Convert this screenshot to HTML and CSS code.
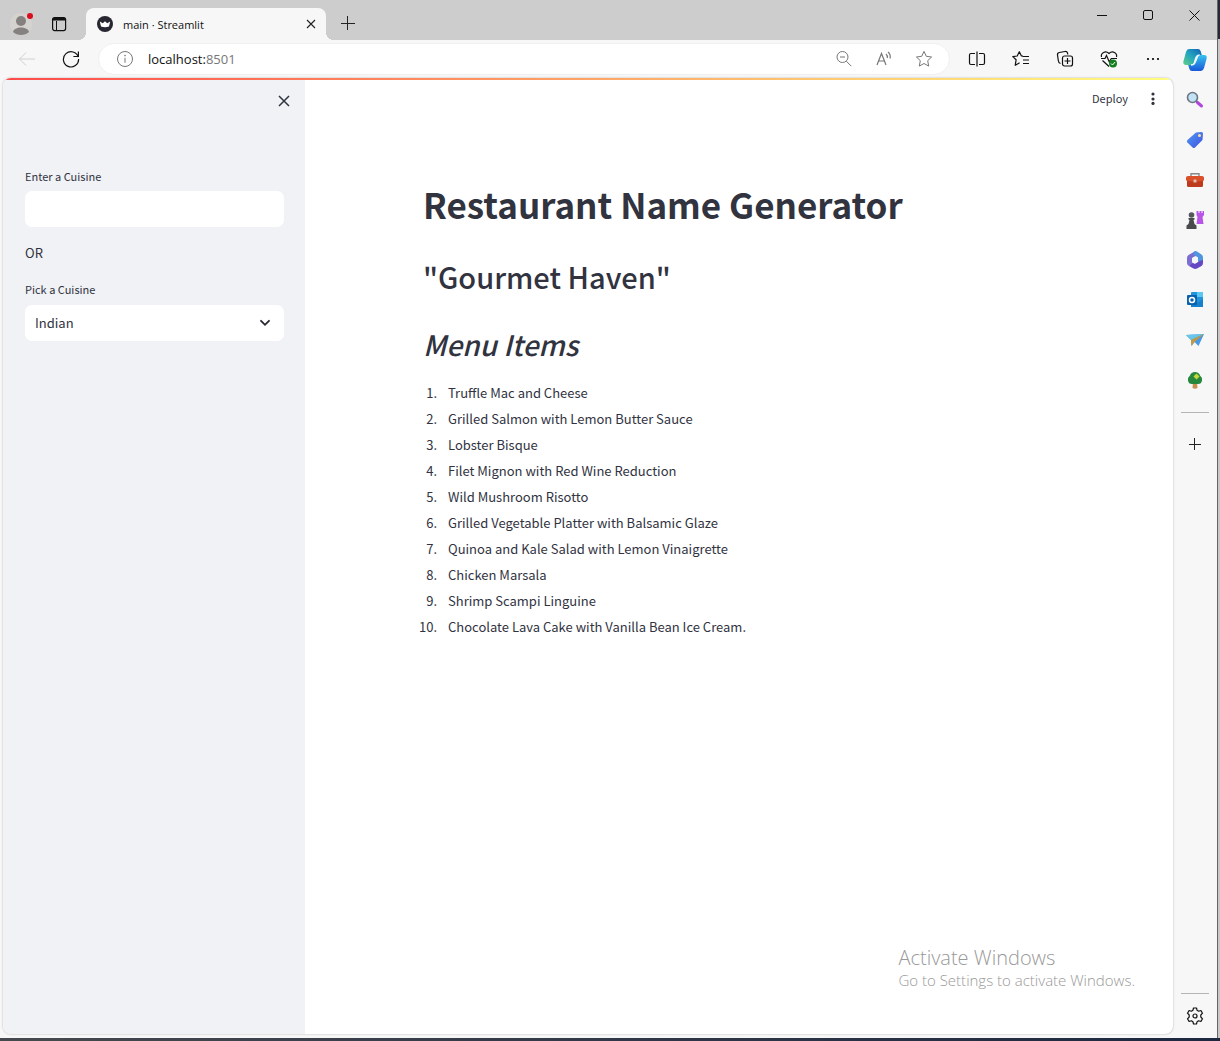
FILE: index.html
```html
<!DOCTYPE html>
<html lang="en">
<head>
<meta charset="utf-8">
<title>main · Streamlit</title>
<link rel="stylesheet" href="styles.css">
</head>
<body>
<div class="window">
  <header class="titlebar">
    <button class="profile" aria-label="Profile">
      <svg width="24" height="26" viewBox="0 0 24 26"><circle cx="12" cy="14" r="11" fill="#d5d3cf"/><circle cx="12" cy="11" r="5" fill="#858181"/><path d="M4 22c1-6 15-6 16 0-4 4-12 4-16 0z" fill="#858181"/><circle cx="21" cy="6" r="3" fill="#d90d1e"/></svg>
    </button>
    <button class="workspaces" aria-label="Tab actions">
      <svg width="16" height="16" viewBox="0 0 16 16"><rect x="1.6" y="1.6" width="13" height="13" rx="2" fill="none" stroke="#111" stroke-width="1.2"/><path d="M1.500 4.600V3.500a2 2 0 0 1 2-2h9a2 2 0 0 1 2 2v1.100z" fill="#111"/><path d="M5.500 5v9" stroke="#111"/></svg>
    </button>
    <div class="tab">
      <svg width="16" height="16" viewBox="0 0 16 16"><circle cx="8" cy="8" r="8" fill="#262730"/><path d="M2.800 5.400l3 1.800L8 5.200l2.200 2 3-1.800-1.200 5q-4 1.600-8 0z" fill="#fff"/></svg>
      <span class="tab-title">main · Streamlit</span>
      <button aria-label="Close tab"><svg width="10" height="10" viewBox="0 0 10 10"><path d="M1 1l8 8M9 1L1 9" stroke="#222" stroke-width="1.1"/></svg></button>
    </div>
    <button class="new-tab" aria-label="New tab"><svg width="14" height="14" viewBox="0 0 14 14"><path d="M6.500 0v14M0 7.500h14" stroke="#222"/></svg></button>
    <div class="controls">
      <button aria-label="Minimize"><svg width="11" height="11" viewBox="0 0 11 11"><path d="M0 5.500h10" stroke="#111"/></svg></button>
      <button aria-label="Maximize"><svg width="11" height="11" viewBox="0 0 11 11"><rect x=".5" y=".5" width="9" height="9" rx="1.500" fill="none" stroke="#111"/></svg></button>
      <button aria-label="Close"><svg width="11" height="11" viewBox="0 0 11 11"><path d="M.5.5l10 10M10.500.5l-10 10" stroke="#111"/></svg></button>
    </div>
  </header>

  <div class="browser">
    <div class="browser-main">
      <nav class="toolbar">
        <button class="tool" aria-label="Back"><svg width="18" height="18" viewBox="0 0 18 18"><path d="M17 9H1.500M8 2.500L1.500 9 8 15.500" fill="none" stroke="#d0d0d0"/></svg></button>
        <button class="tool" aria-label="Refresh"><svg width="18" height="18" viewBox="0 0 18 18"><path d="M16.300 7.200A7.600 7.600 0 1 0 16.600 9M16.400 1.500v5h-5" fill="none" stroke="#111" stroke-width="1.200"/></svg></button>
        <div class="address">
          <svg width="18" height="18" viewBox="0 0 18 18"><circle cx="9" cy="9" r="7.500" fill="none" stroke="#777"/><path d="M9 7.800v5" stroke="#777"/><circle cx="9" cy="5.600" r=".8" fill="#777"/></svg>
          <span class="url">localhost:<span>8501</span></span>
          <button aria-label="Zoom"><svg width="18" height="18" viewBox="0 0 18 18"><path d="M11.300 11.200l5 5M5 7h5" stroke="#777"/><circle cx="7.500" cy="7" r="5.500" fill="none" stroke="#777"/></svg></button>
          <button aria-label="Read aloud"><svg width="18" height="18" viewBox="0 0 18 18"><path d="M2 15L6.500 3.500 11 15M3.500 11h6M11 4q1.800 1.500 1.200 4M13 2q3 2.500 2 6.500" fill="none" stroke="#777" stroke-width="1.200"/></svg></button>
          <button aria-label="Favorite"><svg width="18" height="18" viewBox="0 0 18 18"><path d="M9 1.400l2.300 4.900 5.300.7-3.900 3.700 1 5.400L9 13.500l-4.700 2.600 1-5.400L1.400 7l5.300-.7z" fill="none" stroke="#777" stroke-linejoin="round"/></svg></button>
        </div>
        <button class="tool" aria-label="Split screen"><svg width="18" height="18" viewBox="0 0 18 18"><path d="M7 3.500H3A1.500 1.500 0 0 0 1.500 5v8A1.500 1.500 0 0 0 3 14.500h4M11 3.500h4A1.500 1.500 0 0 1 16.500 5v8a1.500 1.500 0 0 1-1.500 1.500h-4M9 1.500v15" fill="none" stroke="#111" stroke-width="1.200"/></svg></button>
        <button class="tool" aria-label="Favorites"><svg width="18" height="18" viewBox="0 0 18 18"><path d="M11 6L9.300 5.800 7.300 1.700 5.200 6 .8 6.600l3.300 3.200-.9 5.500 4.400-2.500M10.500 6.500H17M11 10h6M11 13.500h6" fill="none" stroke="#111" stroke-width="1.200" stroke-linejoin="round"/></svg></button>
        <button class="tool" aria-label="Collections"><svg width="18" height="18" viewBox="0 0 18 18"><path d="M4.500 13.500Q2.500 13 2.300 10.500L1.500 5Q1.200 3 3.200 2.500L9 1.500Q11 1.200 11.500 3l.3 1.500" fill="none" stroke="#111" stroke-width="1.200"/><rect x="6.500" y="6" width="10" height="10" rx="2" fill="none" stroke="#111" stroke-width="1.200"/><path d="M11.500 8v6M8.500 11h6" stroke="#111" stroke-width="1.200"/></svg></button>
        <button class="tool" aria-label="Browser essentials"><svg width="18" height="18" viewBox="0 0 18 18"><path d="M1.500 7C.5 3 5.500 0 9 3.500 12.500 0 17.500 3 16.500 7M2.500 10.500L9 16.500M1 8.500h4l1.500-3 2.800 6.500 2-3.500H17" fill="none" stroke="#111" stroke-width="1.200"/><circle cx="13" cy="13.500" r="4" fill="#128021"/><path d="M11 13.500l1.500 1.500 2.600-3" fill="none" stroke="#fff"/></svg></button>
        <button class="tool" aria-label="Settings and more"><svg width="18" height="18" viewBox="0 0 18 18"><circle cx="4" cy="9" r="1.100"/><circle cx="9" cy="9" r="1.100"/><circle cx="14" cy="9" r="1.100"/></svg></button>
      </nav>

      <div class="page">
        <div class="rainbow"></div>
        <aside class="sidebar">
          <button class="close-side" aria-label="Close sidebar"><svg width="12" height="12" viewBox="0 0 12 12"><path d="M1 1l10 10M11 1L1 11" stroke="#31333f" stroke-width="1.500"/></svg></button>
          <form class="fields">
            <label for="cuisine">Enter a Cuisine</label>
            <input id="cuisine" type="text">
            <p class="or">OR</p>
            <label for="pick">Pick a Cuisine</label>
            <div class="select">
              <select id="pick"><option>Indian</option></select>
              <svg width="10" height="8" viewBox="0 0 10 8"><path d="M1 1.800l4 4 4-4" fill="none" stroke="#262730" stroke-width="1.800" stroke-linecap="round"/></svg>
            </div>
          </form>
        </aside>
        <main class="main">
          <div class="app-bar">
            <button class="deploy">Deploy</button>
            <button aria-label="Menu"><svg width="6" height="14" viewBox="0 0 6 14"><circle cx="3" cy="3" r="1.600" fill="#31333f"/><circle cx="3" cy="8" r="1.600" fill="#31333f"/><circle cx="3" cy="12.400" r="1.600" fill="#31333f"/></svg></button>
          </div>
          <div class="content">
            <h1>Restaurant Name Generator</h1>
            <h2>"Gourmet Haven"</h2>
            <h2 class="menu-title">Menu Items</h2>
            <ol>
              <li>Truffle Mac and Cheese</li>
              <li>Grilled Salmon with Lemon Butter Sauce</li>
              <li>Lobster Bisque</li>
              <li>Filet Mignon with Red Wine Reduction</li>
              <li>Wild Mushroom Risotto</li>
              <li>Grilled Vegetable Platter with Balsamic Glaze</li>
              <li>Quinoa and Kale Salad with Lemon Vinaigrette</li>
              <li>Chicken Marsala</li>
              <li>Shrimp Scampi Linguine</li>
              <li>Chocolate Lava Cake with Vanilla Bean Ice Cream.</li>
            </ol>
          </div>
        </main>
      </div>
    </div>

    <aside class="rail">
      <button aria-label="Copilot"><svg width="24" height="24" viewBox="0 0 24 24"><defs><linearGradient id="ca" x1="0" y1="1" x2="1" y2="0"><stop offset="0" stop-color="#62cf86"/><stop offset=".5" stop-color="#22a5be"/><stop offset="1" stop-color="#125fb5"/></linearGradient><linearGradient id="cb" x1="0" y1="0" x2="0" y2="1"><stop offset="0" stop-color="#36c3ee"/><stop offset="1" stop-color="#1857d8"/></linearGradient></defs><path d="M6 1h9q2 0 2.600 2l1.200 4h-3q-2 0-2.700 2.500L12 13q-1 4-4 4H3q-3.500 0-2.500-4L3 4q.8-3 3-3z" fill="url(#ca)"/><path d="M18 23H9q-2 0-2.600-2l-1.200-4H8q2.500 0 3.300-2.500L13 9.500Q14 7 16 7h5q3.500 0 2.500 4L21 20q-.8 3-3 3z" fill="url(#cb)"/><path d="M15.500 7q-2 0-2.800 2.500l-1.500 5Q10.500 17 8 17h1.500q2 0 2.800-2.300l2-5Q15 7 16.500 7z" fill="#f2fbff" stroke="#f2fbff"/></svg></button>
      <button aria-label="Search"><svg width="18" height="18" viewBox="0 0 18 18"><path d="M9.500 9.500l2.500 2.500" stroke="#555" stroke-width="2"/><path d="M11.500 11.500l4 3.500" stroke="#b344e0" stroke-width="3" stroke-linecap="round"/><circle cx="6.500" cy="6.500" r="5" fill="#c4e2f5" stroke="#6b7680" stroke-width="1.600"/></svg></button>
      <button aria-label="Shopping"><svg width="18" height="18" viewBox="0 0 18 18"><defs><linearGradient id="tg" x1="0" y1="0" x2="1" y2="1"><stop stop-color="#4e9bf5"/><stop offset="1" stop-color="#4150df"/></linearGradient></defs><path d="M10 1.500l5.500-.5q1.500 0 1.500 1.500L16.500 9 9 16.500q-1.200 1-2.400 0L1.400 11.500q-1-1.200 0-2.400z" fill="url(#tg)"/><circle cx="13.500" cy="4.500" r="1.500" fill="#ffe29a"/></svg></button>
      <button aria-label="Tools"><svg width="18" height="18" viewBox="0 0 18 18"><path d="M5 5.500V2.800h8v2.700" fill="none" stroke="#888" stroke-width="1.400"/><rect x="1" y="8" width="16" height="8" rx="1.500" fill="#bd3b1c"/><path d="M0 9.500V6.500Q0 5 2 5h14q2 0 2 1.500v3q-9 2-18 0z" fill="#d9502a"/><rect x="7.500" y="8.500" width="3" height="3" rx=".5" fill="#d8c0b4"/></svg></button>
      <button aria-label="Games"><svg width="18" height="18" viewBox="0 0 18 18"><path d="M10.500 0h2v2h1V0h2v2h1V0H18v4l-1.500 2 1 7H10.500l1-7-1-2z" fill="#b854e8"/><circle cx="5.500" cy="4" r="2.800" fill="#54565a"/><path d="M2.500 7h6v1.500L7.500 9l1 4 2 1.500V18H.5v-3.500l2-1.500 1-4-1-.5z" fill="#484a4e"/></svg></button>
      <button aria-label="Microsoft 365"><svg width="18" height="18" viewBox="0 0 18 18"><path d="M9.500 0L2.500 4Q1 5 1 7v5q0 2 2 3l3.500-2V7l5.500-3.500z" fill="#7a6fd0"/><path d="M9 0q1 0 2 .6L15.500 3.500Q17 4.500 17 6.500V12l-5-2V6.500L8 4q-1-3 1-4z" fill="#4f95df"/><path d="M17 9v3q0 2-1.500 3L11 17.500q-2 1-4-.2L3 15l3.500-3L9 12.500 12 10.500z" fill="#6648c4"/><path d="M9 5.500l3 1.500v4l-3 1.700L6 11V7z" fill="#f7f7f7"/></svg></button>
      <button aria-label="Outlook"><svg width="18" height="18" viewBox="0 0 18 18"><rect x="5" y="1" width="12" height="15" rx="1" fill="#2294dc"/><path d="M11 1h6v5h-6z" fill="#5cc8f2"/><path d="M5 8l6 4 6-4v8H5z" fill="#1680cc"/><rect x="1" y="4" width="10" height="10" rx="1" fill="#0b61ad"/><circle cx="6" cy="9" r="2.500" fill="none" stroke="#fff" stroke-width="1.500"/></svg></button>
      <button aria-label="Drop"><svg width="18" height="18" viewBox="0 0 18 18"><path d="M0 4l18-1-5.500 12-4-4-3 4-.5-6z" fill="#4799e8"/><path d="M0 4l18-1-13 6z" fill="#69c6e8"/><path d="M5 9l13-6-9.500 8-3 4z" fill="#c39841"/></svg></button>
      <button aria-label="E-tree"><svg width="18" height="18" viewBox="0 0 18 18"><path d="M7 11h4l.5 6q-2.500 1.500-5 0z" fill="#c98f4f"/><path d="M9 1q4 0 5 3.500 2.500 2 2 5-.5 3.500-4 3.500H6q-3.500 0-4-3.500-.5-3 2-5Q5 1 9 1z" fill="#26883c"/><path d="M10.500 2.500L12 4l1.500 1.500L12 7l-1.500 1.500L9 7 7.500 5.500 9 4z" fill="#c6d839"/></svg></button>
      <hr>
      <button aria-label="Customize"><svg width="12" height="12" viewBox="0 0 12 12"><path d="M5.500 0v12M0 6.500h12" stroke="#222"/></svg></button>
      <span class="spring"></span>
      <hr>
      <button class="gear" aria-label="Settings"><svg width="18" height="18" viewBox="0 0 18 18"><path d="M7.500 1h3l.6 2.300 1.500.9 2.300-.7 1.600 2.700L14.800 8v2l1.700 1.800-1.600 2.700-2.300-.7-1.500.9-.6 2.300h-3l-.6-2.300-1.500-.9-2.300.7-1.600-2.700L3.200 10V8L1.500 6.200l1.600-2.700 2.300.7 1.500-.9z" fill="none" stroke="#111" stroke-width="1.200" stroke-linejoin="round"/><circle cx="9" cy="9" r="2" fill="none" stroke="#111" stroke-width="1.200"/></svg></button>
    </aside>
  </div>
  <div class="watermark">
    <p class="mark-title">Activate Windows</p>
    <p class="mark-text">Go to Settings to activate Windows.</p>
  </div>
</div>
</body>
</html>
```
FILE: styles.css
```css
* { box-sizing: border-box; }
body {
  margin: 0;
  min-height: 100vh;
  padding: 0 3px 3px 0;
  display: flex;
  background:
    linear-gradient(#262a38, #262a38) right top / 3px 39px no-repeat,
    linear-gradient(90deg, #45494f, #1d2840) left bottom / 100% 3px no-repeat,
    #c8c8c8;
  font-family: "Noto Sans CJK SC", "Noto Sans", sans-serif;
  color: #31333f;
}
button { border: 0; padding: 0; background: none; font: inherit; color: inherit; display: grid; place-items: center; }
svg { display: block; flex: none; }
p, h1, h2, ol { margin: 0; }

.window { position: relative; flex: 1; display: flex; flex-direction: column; background: #f7f7f7; box-shadow: 1px 0 #666; }
.titlebar { height: 40px; display: flex; align-items: flex-start; background: #cdcdcd; }
.profile { width: 24px; margin: 10px 0 0 9px; }
.workspaces { width: 16px; margin: 16px 0 0 18px; }
.tab {
  position: relative;
  width: 240px;
  height: 32px;
  margin: 8px 0 0 19px;
  padding: 0 10px 0 11px;
  display: flex;
  align-items: center;
  gap: 10px;
  background: #f7f7f7;
  border-radius: 8px 8px 0 0;
}
.tab::before, .tab::after { content: ""; position: absolute; bottom: 0; width: 8px; height: 8px; }
.tab::before { left: -8px; background: radial-gradient(circle at 0 0, #cdcdcd 8px, #f7f7f7 8px); }
.tab::after { right: -8px; background: radial-gradient(circle at 100% 0, #cdcdcd 8px, #f7f7f7 8px); }
.tab-title { flex: 1; font: 11px "Open Sans", sans-serif; color: #111; }
.new-tab { margin: 16px 0 0 15px; }
.controls { display: flex; margin-left: auto; }
.controls button { width: 46px; height: 30px; }

.browser { flex: 1; display: flex; }
.browser-main { flex: 1; min-width: 0; display: flex; flex-direction: column; padding: 0 0 4px 3px; }
.toolbar { height: 38px; display: flex; align-items: center; padding-left: 2px; margin-right: -2px; }
.tool { width: 44px; height: 36px; }
.address { flex: 1; height: 32px; margin: 0 5px; padding: 0 16px 0 17px; display: flex; align-items: center; gap: 22px; background: #fff; border: 1px solid #f0f0f0; border-radius: 16px; }
.url { flex: 1; margin-left: -8px; font: 13px "Open Sans", sans-serif; color: #111; }
.url span { color: #777; }

.page { position: relative; flex: 1; display: flex; border-radius: 8px; overflow: hidden; background: #fff; box-shadow: 0 0 2px #aaa; }
.rainbow { position: absolute; top: 0; left: 3px; right: 2px; height: 2px; background: linear-gradient(90deg, #ff4b4b, #fffd80); }
.sidebar { width: 302px; flex: none; padding-top: 17px; background: #f0f2f6; }
.close-side { margin: 0 15px 0 auto; }
.fields { margin: 60px 21px 0 22px; display: flex; flex-direction: column; }
label { font-size: 11px; line-height: 18px; }
input, select { width: 100%; height: 36px; border: 0; border-radius: 7px; background: #fff; font: inherit; font-size: 13px; color: #31333f; padding: 0 10px; }
input { margin: 6px 0 15px; }
.or { font-size: 13px; line-height: 22px; margin-bottom: 16px; }
.select { position: relative; margin-top: 7px; }
select { appearance: none; padding-bottom: 2px; }
.select svg { position: absolute; right: 14px; top: 14px; pointer-events: none; }

.main { flex: 1; min-width: 0; }
.app-bar { display: flex; justify-content: flex-end; align-items: center; gap: 22px; height: 40px; padding-right: 17px; }
.deploy { font-size: 11px; }
.content { max-width: 632px; margin: 62px auto 0; }
h1 { font-size: 35px; font-weight: 700; line-height: 48px; }
h2 { font-size: 29px; font-weight: 500; line-height: 40px; margin-top: 28px; }
h2.menu-title { font-size: 28px; font-style: italic; }
ol { margin-top: 16px; padding-left: 17px; font-size: 13px; line-height: 26px; }
li { padding-left: 8px; }

.rail { width: 44px; flex: none; display: flex; flex-direction: column; align-items: center; padding-bottom: 2px; }
.rail button { width: 40px; height: 40px; flex: none; }
.rail hr { width: 28px; height: 1px; margin: 12px 0 11px; border: 0; background: #b5b5b5; flex: none; }
.spring { flex: 1; }
.rail hr:last-of-type { margin: 0 0 2px; }

.watermark { position: absolute; right: 82px; bottom: 48px; font-family: "Open Sans", sans-serif; font-weight: 300; color: #999; pointer-events: none; }
.mark-title { font-size: 20px; line-height: 24px; }
.mark-text { font-size: 15px; line-height: 20px; }
```
